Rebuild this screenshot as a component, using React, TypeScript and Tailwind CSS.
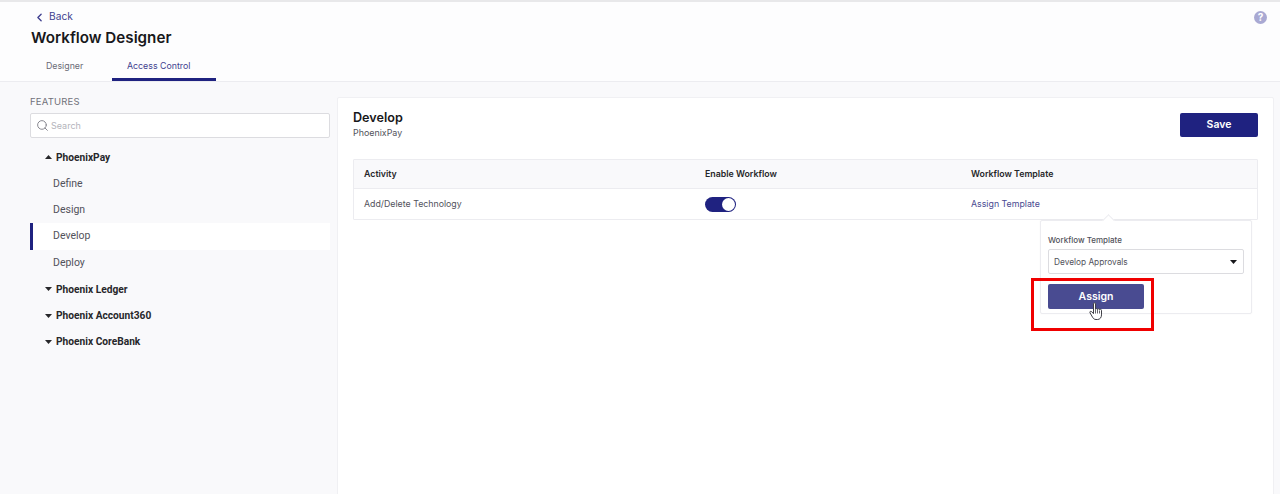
import { ChevronLeft, Search } from 'lucide-react'

function Caret({ up }: { up?: boolean }) {
  return (
    <svg width="7" height="4" viewBox="0 0 7 4" className="mr-[4px] shrink-0" fill="#27272a">
      <path d={up ? 'M0 4 L3.5 0 L7 4 Z' : 'M0 0 L7 0 L3.5 4 Z'} />
    </svg>
  )
}

function Group({ name, up }: { name: string; up?: boolean }) {
  return (
    <div className="flex items-center h-[26.4px] pl-[15px] font-['Roboto',sans-serif] text-[10.2px] font-bold text-[#27272a]">
      <Caret up={up} />
      {name}
    </div>
  )
}

function Item({ name, active }: { name: string; active?: boolean }) {
  return (
    <div className={`flex items-center h-[26.4px] pl-[20px] font-['Roboto',sans-serif] text-[10.5px] text-[#52525b] border-l-[3px] ${active ? 'bg-white border-[#1f2280]' : 'border-transparent'}`}>
      {name}
    </div>
  )
}

function HandCursor() {
  return (
    <svg width="14" height="19" viewBox="0 0 14 19" className="absolute left-[1089px] top-[302px]" fill="#fff" stroke="#3f3f46" strokeWidth="1" strokeLinejoin="round">
      <path d="M4.5 1.8c0-1.3 2-1.3 2 0v5.6c0-1 2-1 2 .1 0-1 2-.9 2 .2 0-.8 2-.6 2 .6v4.6c0 2.5-1.5 4.6-4 4.6H7c-1.7 0-2.6-.9-3.4-2.2L1 10.8c-.7-1.2.8-2.1 1.7-1.1l1.8 2z" />
      <path d="M6.5 8v3.5M8.5 8v3.5M10.5 8.5v3" fill="none" strokeWidth="0.8" />
    </svg>
  )
}

export default function App() {
  return (
    <div className="relative h-[494px] w-[1280px] overflow-hidden bg-[#f9f9fb] font-['Inter',sans-serif]">
      <header className="relative h-[82px] border-t-2 border-b border-t-[#e8e8ea] border-b-[#ececf0] bg-[#fdfdfe]">
        <div className="flex h-[24px] items-center pl-[33px] pt-[6px] text-[10.2px] text-[#3f3f8f]">
          <ChevronLeft size={13} strokeWidth={2.5} className="mr-[1px]" />
          <span className="ml-[2px]">Back</span>
        </div>
        <h1 className="pl-[31px] text-[15.2px] leading-[24px] font-semibold text-[#18181b]">Workflow Designer</h1>
        <div className="flex pl-[31px] mt-[4px] text-[8.8px]">
          <div className="flex h-[27px] w-[81px] items-center pl-[15px] text-[#6b6b76] pb-[3px]">Designer</div>
          <div className="flex h-[27px] w-[104px] items-center pl-[15px] pb-[1px] text-[#3f3f8f] border-b-[3px] border-[#1f2280]">Access Control</div>
        </div>
        <div className="absolute right-[13px] top-[9px] flex h-[13px] w-[13px] items-center justify-center rounded-full bg-[#a9a9d3] text-[10px] font-bold text-white">?</div>
      </header>

      <div className="flex">
        <aside className="w-[337px] shrink-0 pt-[14px] pl-[30px] pr-[7px]">
          <div className="text-[9.5px] leading-[12px] tracking-[0.2px] text-[#71717a]">FEATURES</div>
          <div className="mt-[5px] flex h-[25px] items-center rounded-[2px] border border-[#dcdce0] bg-white pl-[5px] text-[9px] text-[#b4b4bb]">
            <Search size={13} strokeWidth={1.8} className="text-[#85858d] mr-[2px]" />
            <span>Search</span>
          </div>
          <div className="mt-[6px]">
            <Group name="PhoenixPay" up />
            <Item name="Define" />
            <Item name="Design" />
            <Item name="Develop" active />
            <Item name="Deploy" />
            <Group name="Phoenix Ledger" />
            <Group name="Phoenix Account360" />
            <Group name="Phoenix CoreBank" />
          </div>
        </aside>

        <main className="mt-[15px] mr-[6px] h-[420px] flex-1 rounded-[2px] border border-[#f0f0f3] bg-white px-[15px] pt-[12px]">
          <div className="flex items-start justify-between">
            <div>
              <div className="text-[12.6px] leading-[16px] font-semibold text-[#18181b]">Develop</div>
              <div className="text-[8.9px] leading-[12px] text-[#52525b] mt-[1px]">PhoenixPay</div>
            </div>
            <button className="mt-[3px] h-[24px] w-[78px] rounded-[2px] bg-[#1f2280] text-[10.5px] font-semibold text-white">Save</button>
          </div>
          <div className="mt-[20px] rounded-[1px] border border-[#ececf0] text-[8.8px]">
            <div className="flex h-[29px] items-center border-b border-[#ececf0] bg-[#f9f9fb] font-semibold text-[#27272a]">
              <div className="w-[351px] pl-[10px]">Activity</div>
              <div className="w-[266px]">Enable Workflow</div>
              <div>Workflow Template</div>
            </div>
            <div className="flex h-[30px] items-center text-[#52525b]">
              <div className="w-[351px] pl-[10px]">Add/Delete Technology</div>
              <div className="w-[266px]">
                <div className="flex h-[15px] w-[31px] items-center justify-end rounded-full bg-[#1f2280] pr-[1px]">
                  <div className="h-[13px] w-[13px] rounded-full bg-white" />
                </div>
              </div>
              <div className="text-[#4a4a91]">Assign Template</div>
            </div>
          </div>
        </main>
      </div>

      {/* popover */}
      <div className="absolute left-[1040px] top-[220px] h-[94px] w-[212px] rounded-[2px] border border-[#ececf0] bg-white px-[7px] pt-[14px] shadow-[0_0_2px_rgba(0,0,0,0.04)]">
        <div className="absolute left-[63px] top-[-5px] h-[9px] w-[9px] rotate-45 border-l border-t border-[#ececf0] bg-white" />
        <div className="text-[8px] leading-[11px] font-medium text-[#52525b]">Workflow Template</div>
        <div className="mt-[3px] flex h-[25px] items-center justify-between rounded-[2px] border border-[#dcdce0] pl-[5px] pr-[6px] pt-[1px] text-[8.3px] text-[#52525b]">
          Develop Approvals
          <svg width="7" height="4" viewBox="0 0 7 4" fill="#18181b"><path d="M0 0h7L3.5 4z" /></svg>
        </div>
        <button className="mt-[10px] block h-[25px] w-[96px] rounded-[2px] bg-[#494b91] text-[10.5px] font-semibold text-white">Assign</button>
      </div>
      <div className="absolute left-[1031px] top-[278px] h-[53px] w-[123px] border-[3px] border-[#f00000]" />
      <HandCursor />
    </div>
  )
}
